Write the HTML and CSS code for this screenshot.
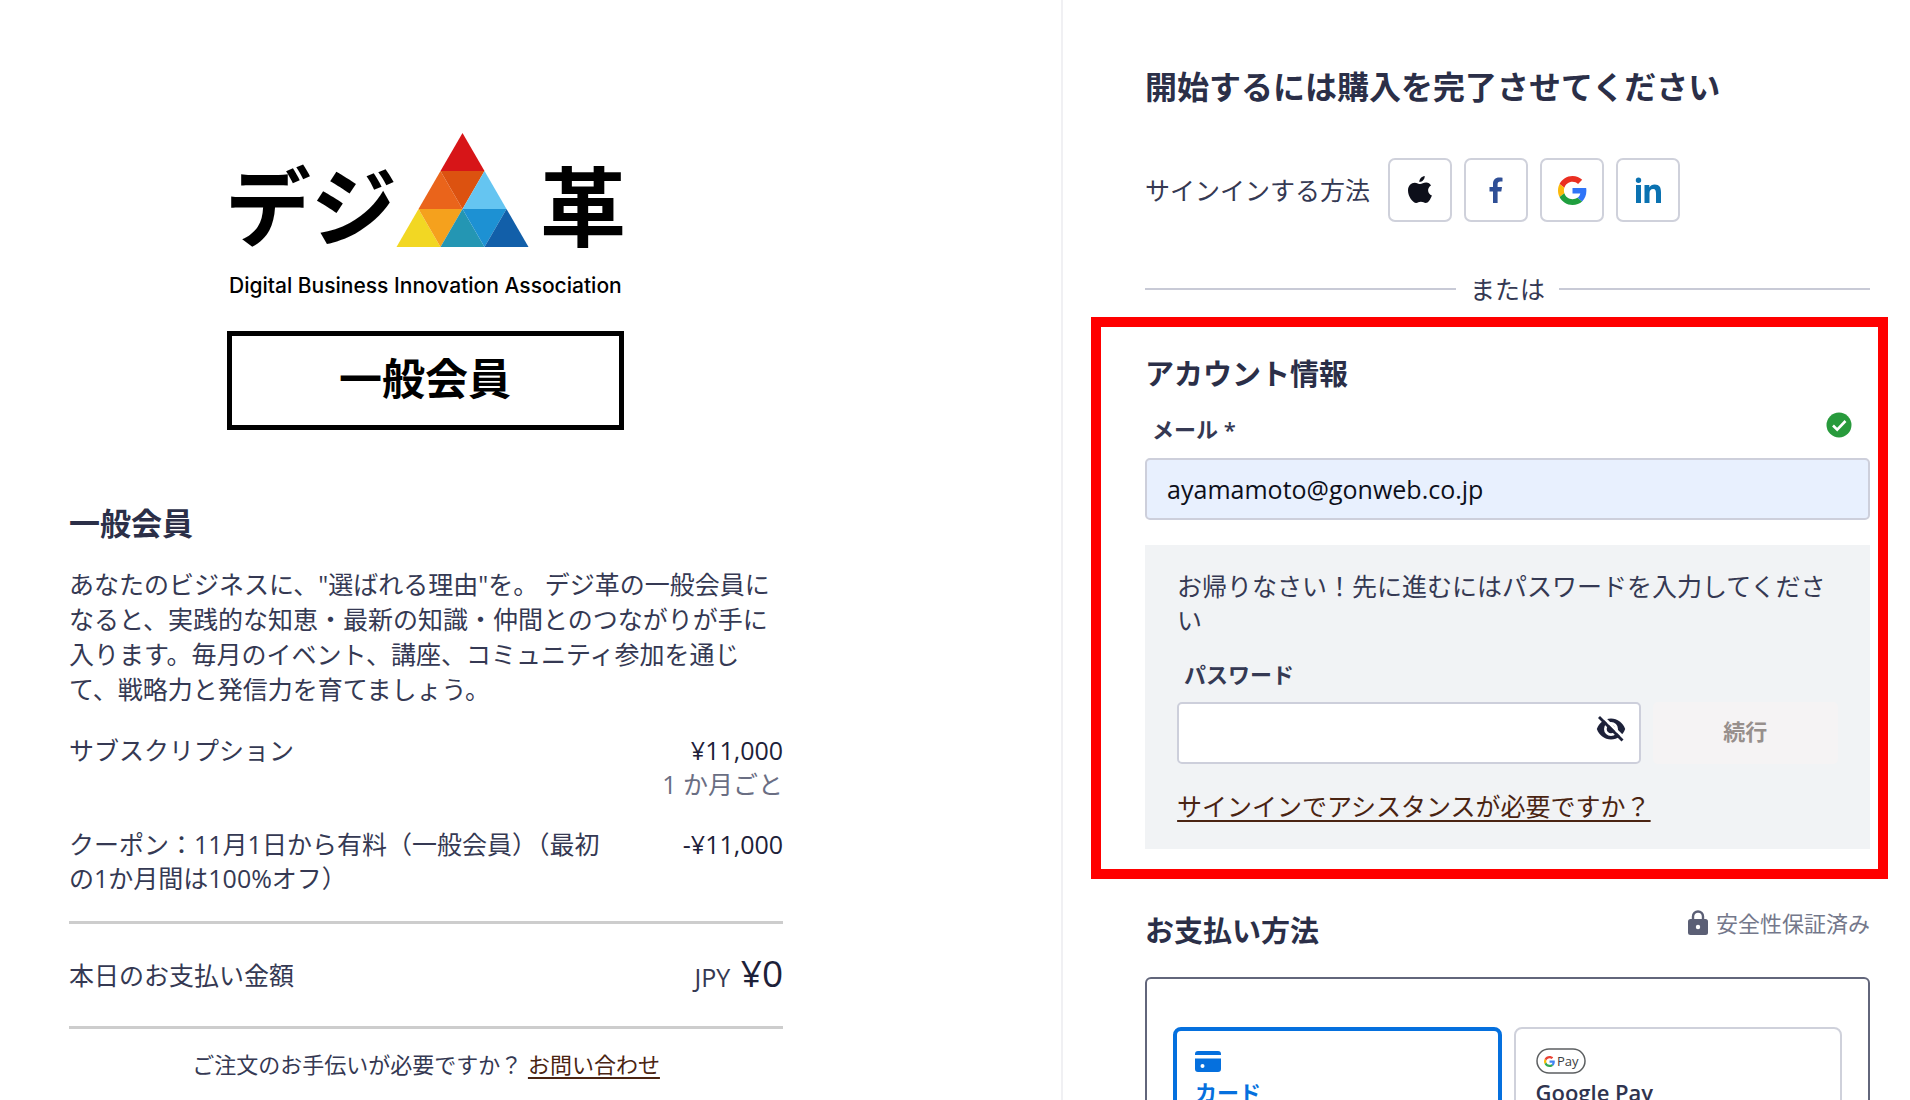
FILE: index.html
```html
<!DOCTYPE html>
<html lang="ja">
<head>
<meta charset="utf-8">
<title>一般会員 | デジ革</title>
<link rel="stylesheet" href="styles.css">
</head>
<body>
<div class="checkout">
  <section class="summary">
    <svg class="logo" width="398" height="298" viewBox="0 0 398 298" role="img" aria-label="デジ革 一般会員">
      <text class="logo-name" x="-2" y="107">デジ</text>
      <text class="logo-name" x="313" y="107">革</text>
      <path fill="#d71518" d="M235.500 0l22 38h-44z"/>
      <path fill="#ea641b" d="M213.500 38l22 38h-44z"/>
      <path fill="#dc5210" d="M213.500 38h44l-22 38z"/>
      <path fill="#65c5f1" d="M257.500 38l22 38h-44z"/>
      <path fill="#f2d723" d="M191.500 76l22 38h-44z"/>
      <path fill="#f5a11d" d="M191.500 76h44l-22 38z"/>
      <path fill="#2496b3" d="M235.500 76l22 38h-44z"/>
      <path fill="#1d91d3" d="M235.500 76h44l-22 38z"/>
      <path fill="#125fa9" d="M279.500 76l22 38h-44z"/>
      <text class="logo-sub" x="2" y="160">Digital Business Innovation Association</text>
      <rect x="2.500" y="200.500" width="392" height="94" fill="none" stroke="#000" stroke-width="5"/>
      <text class="logo-plan" x="198" y="262" text-anchor="middle">一般会員</text>
    </svg>
    <h2 class="plan">一般会員</h2>
    <p class="desc">あなたのビジネスに、"選ばれる理由"を。 デジ革の一般会員になると、実践的な知恵・最新の知識・仲間とのつながりが手に入ります。毎月のイベント、講座、コミュニティ参加を通じて、戦略力と発信力を育てましょう。</p>
    <dl class="lines">
      <div class="line">
        <dt>サブスクリプション</dt>
        <dd><span class="price">¥11,000</span><span class="period">1 か月ごと</span></dd>
      </div>
      <div class="line">
        <dt>クーポン：11月1日から有料（一般会員）（最初の1か月間は100%オフ）</dt>
        <dd><span class="price">-¥11,000</span></dd>
      </div>
      <div class="line total">
        <dt>本日のお支払い金額</dt>
        <dd>JPY <span class="due">¥0</span></dd>
      </div>
    </dl>
    <p class="help">ご注文のお手伝いが必要ですか？ <a href="#contact">お問い合わせ</a></p>
  </section>

  <main class="form">
    <h1>開始するには購入を完了させてください</h1>
    <div class="signin">
      <span>サインインする方法</span>
      <div class="socials">
        <button type="button" class="social" aria-label="Apple">
          <svg width="26" height="30" viewBox="0 0 26 30"><path fill="#0d0f1a" d="M17.700 1c.3 3-2.500 6.100-5.300 6C12 4.300 14.700 1.300 17.700 1zM24 10.500c-4.300 2.600-3.600 8.200.9 10-1.500 4-3.700 7.500-6.100 7.500-1.900 0-2.600-1.200-4.900-1.200S10.900 28 9.200 28C5.800 28 1 21.300 1 15.500 1 10.500 4.200 7.700 7.700 7.700c2.300 0 4 1.400 5.600 1.400 1.400 0 3.500-1.600 6-1.500 2 .1 3.700 1.100 4.700 2.900z"/></svg>
        </button>
        <button type="button" class="social" aria-label="Facebook">
          <svg width="26" height="30" viewBox="0 0 26 30"><path fill="#2f4f96" d="M10 28V16.500H6.500V12H10V9c0-4.200 2.200-6.600 6.200-6.600 1.200 0 2.300.1 3.300.3v3.900h-2c-2.100 0-2.900.9-2.900 2.700V12H19l-.7 4.500h-3.700V28z"/></svg>
        </button>
        <button type="button" class="social" aria-label="Google">
          <svg width="29" height="29" viewBox="0 0 48 48"><path fill="#ea2f22" d="M24 9.500c3.540 0 6.710 1.220 9.210 3.600l6.850-6.850C35.900 2.380 30.470 0 24 0 14.620 0 6.510 5.380 2.560 13.220l7.980 6.190C12.430 13.720 17.740 9.500 24 9.500z"/><path fill="#2f74f8" d="M46.980 24.550c0-1.570-.15-3.090-.38-4.550H24v9.020h12.940c-.58 2.960-2.260 5.480-4.780 7.180l7.730 6c4.510-4.180 7.090-10.360 7.090-17.650z"/><path fill="#fbb90c" d="M10.530 28.590c-.48-1.450-.76-2.990-.76-4.590s.27-3.140.76-4.590l-7.980-6.190C.92 16.460 0 20.120 0 24c0 3.880.92 7.540 2.560 10.780l7.970-6.190z"/><path fill="#1f9f3f" d="M24 48c6.480 0 11.930-2.130 15.890-5.810l-7.730-6c-2.150 1.450-4.920 2.300-8.160 2.300-6.260 0-11.570-4.220-13.470-9.910l-7.980 6.190C6.510 42.620 14.620 48 24 48z"/></svg>
        </button>
        <button type="button" class="social" aria-label="LinkedIn">
          <svg width="28" height="30" viewBox="0 0 28 30"><path fill="#0b72b1" d="M2 10h5v18H2zM4.500 2.500a2.700 2.700 0 1 1 0 5.400 2.700 2.700 0 0 1 0-5.400zM10.500 10h4.800v2.500c1-1.700 2.900-2.900 5.400-2.900 4.700 0 6.300 2.800 6.300 7.600V28h-5V18.400c0-2.500-.5-4.400-2.900-4.400-2.500 0-3.600 1.700-3.600 4.500V28h-5z"/></svg>
        </button>
      </div>
    </div>
    <div class="or">または</div>

    <form class="account">
      <h2>アカウント情報</h2>
      <div class="label-row">
        <label for="email">メール *</label>
        <svg width="26" height="26" viewBox="0 0 26 26" aria-hidden="true"><circle cx="13" cy="13" r="12.500" fill="#289a3c"/><path d="M7 13.500l4.200 4.200L19.500 9" fill="none" stroke="#fff" stroke-width="2.600"/></svg>
      </div>
      <input class="field email" id="email" type="email" value="ayamamoto@gonweb.co.jp">
      <div class="returning">
        <p>お帰りなさい！先に進むにはパスワードを入力してください</p>
        <label for="password">パスワード</label>
        <div class="password-row">
          <div class="password">
            <input class="field" id="password" type="password">
            <button type="button" class="eye" aria-label="パスワードを表示">
              <svg width="30" height="26" viewBox="0 0 30 26"><path fill="#1d2139" d="M15 2.500C8.500 2.500 3 6.800.8 13 3 19.200 8.500 23.500 15 23.500S27 19.200 29.200 13C27 6.800 21.500 2.500 15 2.500z"/><circle cx="15" cy="13" r="7" fill="#fff"/><circle cx="15" cy="13" r="4.300" fill="#1d2139"/><path d="M5.500-.5l23 23" stroke="#fff" stroke-width="3"/><path d="M3 1l23.500 23.500" stroke="#1d2139" stroke-width="2.800"/></svg>
            </button>
          </div>
          <button type="submit" class="continue" disabled>続行</button>
        </div>
        <a href="#assist">サインインでアシスタンスが必要ですか？</a>
      </div>
    </form>

    <div class="pay-head">
      <h2>お支払い方法</h2>
      <span class="secure">
        <svg width="20" height="26" viewBox="0 0 20 26" aria-hidden="true"><path d="M5 11V6.500a5 5 0 0 1 10 0V11" fill="none" stroke="#5b5f75" stroke-width="2.400"/><rect y="9" width="20" height="16" rx="2.500" fill="#5b5f75"/><circle cx="10" cy="17" r="2.200" fill="#fff"/></svg>
        安全性保証済み
      </span>
    </div>
    <div class="methods">
      <button type="button" class="method selected">
        <svg width="26" height="26" viewBox="0 0 26 26" aria-hidden="true"><path fill="#0570de" d="M3 3h20a3 3 0 0 1 3 3v1H0V6a3 3 0 0 1 3-3zM0 10.500h26V21a3 3 0 0 1-3 3H3a3 3 0 0 1-3-3z"/><circle cx="7.500" cy="18" r="2" fill="#fff"/></svg>
        カード
      </button>
      <button type="button" class="method">
        <svg width="50" height="26" viewBox="0 0 50 26" aria-hidden="true"><rect x="1" y="1" width="48" height="24" rx="12" fill="#fff" stroke="#5c5f61" stroke-width="1.500"/><g transform="translate(8 8) scale(.23)"><path fill="#ea4335" d="M24 9.500c3.540 0 6.710 1.220 9.210 3.600l6.850-6.850C35.900 2.380 30.470 0 24 0 14.620 0 6.510 5.380 2.560 13.220l7.980 6.190C12.430 13.720 17.740 9.500 24 9.500z"/><path fill="#4285f4" d="M46.980 24.550c0-1.570-.15-3.090-.38-4.550H24v9.020h12.940c-.58 2.960-2.260 5.480-4.780 7.180l7.730 6c4.510-4.180 7.090-10.360 7.090-17.650z"/><path fill="#fbbc05" d="M10.530 28.590c-.48-1.450-.76-2.990-.76-4.590s.27-3.140.76-4.590l-7.980-6.190C.92 16.460 0 20.120 0 24c0 3.880.92 7.540 2.560 10.780l7.970-6.190z"/><path fill="#34a853" d="M24 48c6.480 0 11.930-2.130 15.890-5.810l-7.730-6c-2.150 1.450-4.920 2.300-8.160 2.300-6.260 0-11.570-4.220-13.470-9.910l-7.980 6.190C6.510 42.620 14.620 48 24 48z"/></g><text class="gpay" x="21" y="18">Pay</text></svg>
        Google Pay
      </button>
    </div>
  </main>
</div>
</body>
</html>
```
FILE: styles.css
```css
* { box-sizing: border-box; }
body {
  margin: 0;
  height: 100vh;
  overflow: hidden;
  background: #fff;
  color: #353953;
  font: 25px/34px "Open Sans", "Noto Sans CJK JP", sans-serif;
}
h1, h2, p, dl, dd { margin: 0; }
h1, h2 { color: #2b2f48; font-weight: 700; }
button, input { font-family: inherit; }
svg { display: block; flex: none; }
a { color: #4a2412; text-decoration-thickness: 2px; text-underline-offset: 4px; }

.checkout {
  display: grid;
  grid-template-columns: 5fr 4fr;
  min-height: 100vh;
}

/* order summary */
.summary {
  display: flex;
  flex-direction: column;
  padding: 133px 278px 0 69px;
}
.logo { align-self: center; overflow: visible; }
.logo-name { font: 700 86px "Noto Sans CJK JP", sans-serif; }
.logo-sub { font: 500 21px Inter, sans-serif; }
.logo-plan { font: 700 43px "Noto Sans CJK JP", sans-serif; }
.plan { margin: 68px 0 20px; font-size: 31px; line-height: 48px; }
.desc { line-height: 35px; }
.lines {
  display: flex;
  flex-direction: column;
  gap: 26px;
  margin-top: 26px;
}
.line { display: flex; justify-content: space-between; }
.line dt { max-width: 550px; }
.line dd { text-align: right; white-space: nowrap; }
.price, .period { display: block; }
.price { color: #1d2139; font-weight: 500; }
.period { color: #6a6e83; }
.total {
  align-items: center;
  padding: 24px 0;
  border: solid #cdcdcd;
  border-width: 3px 0;
}
.total dd { line-height: 50px; }
.due {
  margin-left: 4px;
  color: #1d2139;
  font-size: 37px;
  font-weight: 500;
}
.help { margin-top: 18px; font-size: 22px; text-align: center; }

/* checkout form */
.form { padding: 64px 40px 0 82px; border-left: 2px solid #f0f0f3; }
h1 { font-size: 32px; line-height: 46px; }
.signin { display: flex; align-items: center; gap: 18px; margin-top: 48px; }
.socials { display: flex; gap: 12px; }
.social {
  display: grid;
  place-items: center;
  width: 64px;
  height: 64px;
  padding: 0;
  border: 2px solid #cfd1db;
  border-radius: 7px;
  background: #fff;
}
.or {
  display: flex;
  align-items: center;
  gap: 14px;
  margin-top: 50px;
}
.or::before, .or::after { content: ""; flex: 1; height: 2px; background: #c8cad6; }

.account {
  margin: 11px -18px 0 -54px;
  padding: 26px 8px 20px 44px;
  border: 10px solid #f00;
}
.account h2, .pay-head h2 { font-size: 29px; line-height: 42px; }
label { padding-left: 7px; font-size: 22px; font-weight: 600; }
.label-row {
  display: flex;
  justify-content: space-between;
  margin-top: 17px;
  padding-right: 18px;
}
.field {
  display: block;
  width: 100%;
  height: 62px;
  padding: 0 20px;
  border: 2px solid #cdcfdb;
  border-radius: 5px;
  background: #fff;
  color: #0d0f1a;
  font-size: 25px;
}
.email { margin-top: 12px; background: #e8f0fe; }
.returning {
  margin-top: 25px;
  padding: 24px 32px 26px;
  background: #f1f3f5;
}
.returning label { display: block; margin: 20px 0 11px; }
.password-row { display: flex; gap: 12px; margin-bottom: 25px; }
.password { position: relative; flex: 5; }
.eye {
  position: absolute;
  top: 14px;
  right: 15px;
  padding: 0;
  border: 0;
  background: none;
}
.continue {
  flex: 2;
  padding: 0 0 4px;
  border: 0;
  border-radius: 5px;
  background: #f5f3f4;
  color: #978f8c;
  font-size: 22px;
  font-weight: 600;
  line-height: 34px;
}

.pay-head { display: flex; justify-content: space-between; margin-top: 31px; }
.secure {
  display: flex;
  align-items: center;
  gap: 8px;
  align-self: flex-start;
  color: #74788b;
  font-size: 22px;
  line-height: 26px;
}
.methods {
  display: grid;
  grid-template-columns: 1fr 1fr;
  align-items: start;
  gap: 12px;
  height: 220px;
  margin-top: 25px;
  padding: 48px 26px;
  border: 2px solid #62667b;
  border-radius: 6px;
}
.method {
  display: flex;
  flex-direction: column;
  align-items: flex-start;
  gap: 2px;
  padding: 19px 20px;
  border: 2px solid #cfd1db;
  border-radius: 8px;
  background: #fff;
  color: #30344f;
  font-size: 22px;
  font-weight: 600;
  line-height: 32px;
}
.selected { padding: 17px 18px; border: 4px solid #0570de; color: #0570de; }
.gpay { font: 13px "Open Sans", sans-serif; fill: #3c4043; }
```
